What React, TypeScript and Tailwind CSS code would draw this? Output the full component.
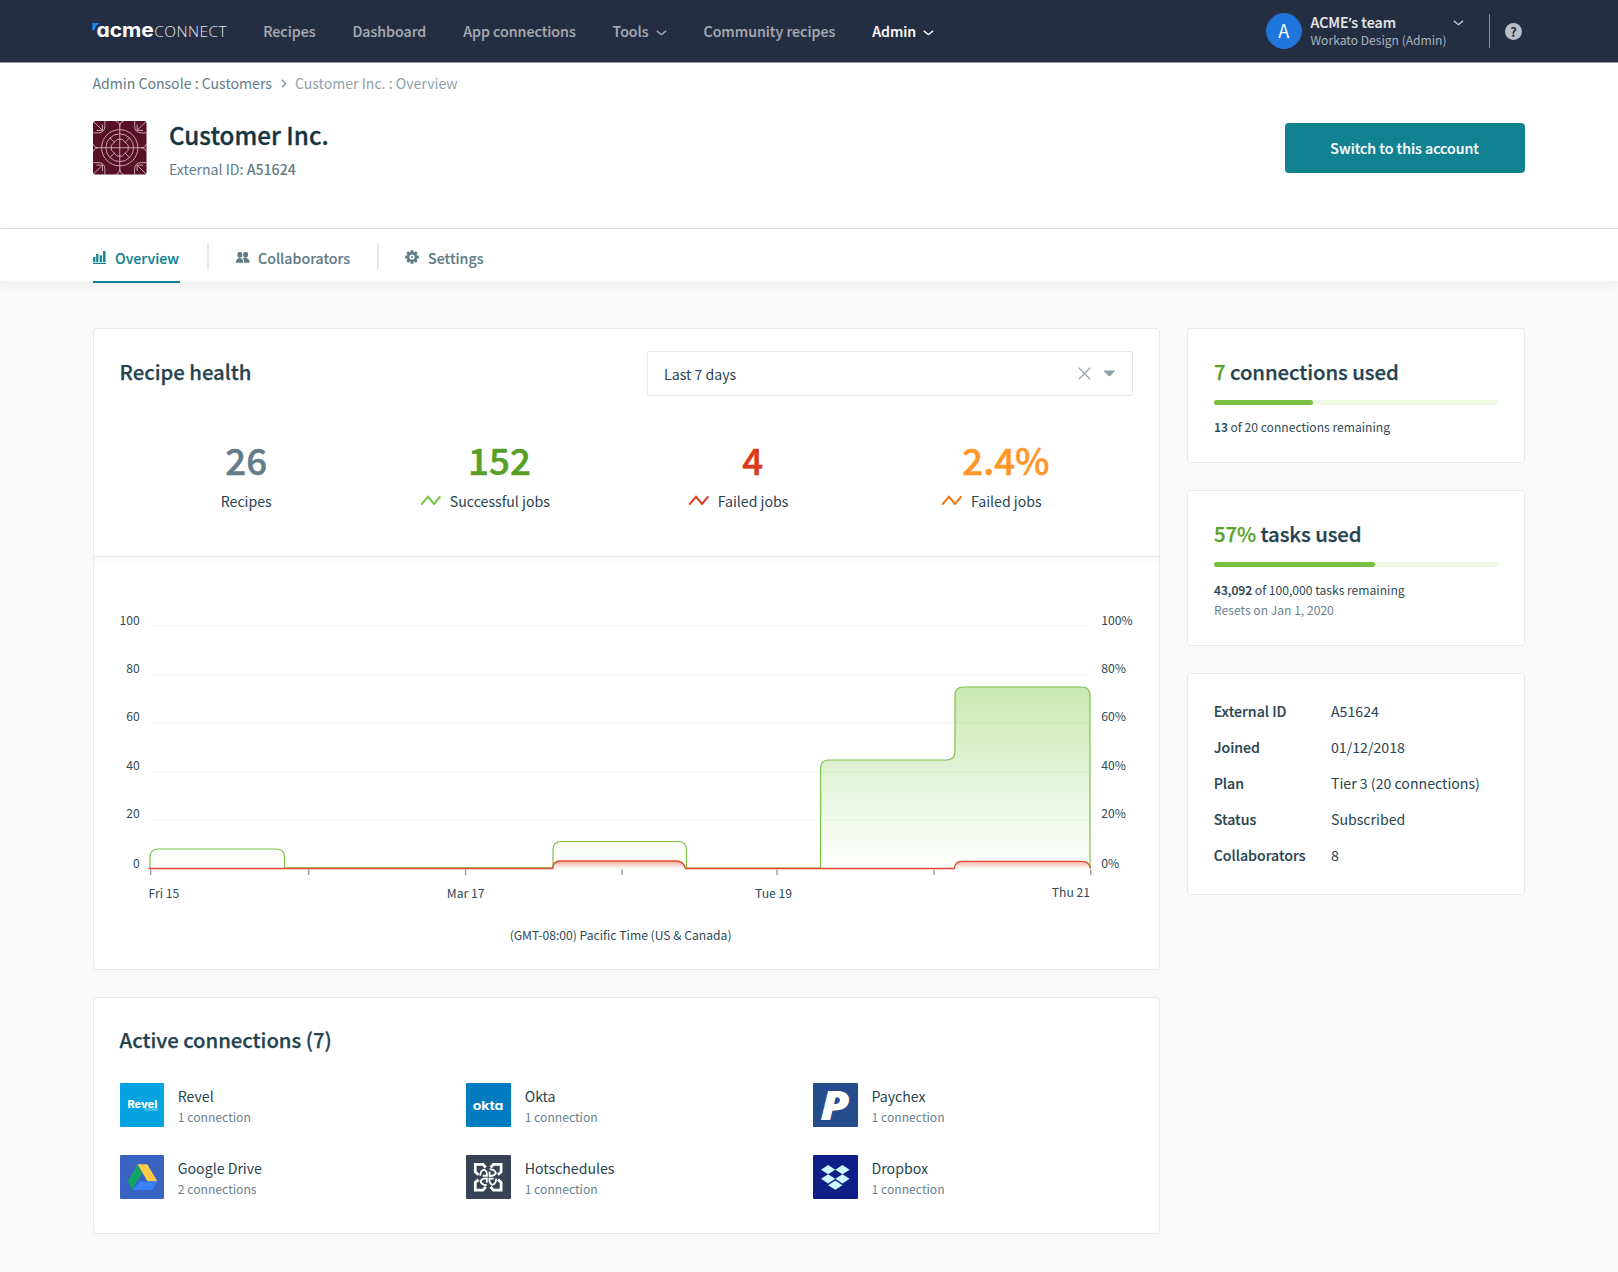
import React from "react";

const FONT = "font-['Noto_Sans_CJK_SC','Noto_Sans',sans-serif]";

function Chevron({ className, color }: { className?: string; color: string }) {
  return (
    <svg className={className} width="11" height="6" viewBox="0 0 11 6" fill="none">
      <path d="M0.8 0.9 L5.4 4.7 L10 0.9" stroke={color} strokeWidth="1.4" />
    </svg>
  );
}

function Logo() {
  return (
    <div className="flex h-[62px] w-[134px] items-center">
      <svg width="134" height="24" viewBox="0 0 134 24" className="overflow-visible">
        <path d="M-0.7 4 H6.8 L3 7.1 L1.2 11.2 H-0.7 Z" fill="#1a87f5" />
        <text x="3.4" y="17.6" fill="#fff" className="font-['Inter'] text-[19.3px] font-bold [font-feature-settings:'cv11']" textLength="57.5" lengthAdjust="spacingAndGlyphs">
          acme
        </text>
        <text x="61.2" y="17.7" fill="#e4e6ea" className="font-['Open_Sans'] text-[15.4px] font-light" textLength="72.5">
          CONNECT
        </text>
      </svg>
    </div>
  );
}

function TopBar() {
  return (
    <header className="flex h-[63px] justify-between border-b border-[#9296a3] bg-[#242e42] px-[93px]">
      <div className="flex items-center">
        <Logo />
        <nav className="ml-[36.2px] flex gap-[36.85px] text-[14.2px] leading-[62px] font-medium text-[#a5a9b1] [-webkit-text-stroke:0.15px]">
          <span>Recipes</span>
          <span>Dashboard</span>
          <span>App connections</span>
          <span className="flex items-center">
            Tools
            <Chevron className="mt-[3px] ml-[7px]" color="#a5a9b1" />
          </span>
          <span>Community recipes</span>
          <span className="flex items-center text-white">
            Admin
            <Chevron className="mt-[3px] ml-[7px]" color="#ffffff" />
          </span>
        </nav>
      </div>
      <div className="flex h-[62px] items-center">
        <div className="flex size-9 items-center justify-center rounded-full border-[1.5px] border-[#2c6cc4] bg-[#1f76dc] pb-[2px] text-[18px] leading-9 text-white">A</div>
        <div className="mb-[2px] ml-[8.7px] w-[142px]">
          <div className="h-[18px] text-[14.2px] leading-[18px] font-medium text-[#e6e8ec] [-webkit-text-stroke:0.15px]">
            ACME<span className="font-['Noto_Sans']">’</span>s team
          </div>
          <div className="h-[17px] text-[12.1px] leading-[17px] text-[#a9b4bf]">Workato Design (Admin)</div>
        </div>
        <Chevron className="mb-[17px]" color="#c3c8cf" />
        <div className="ml-[25.5px] h-[34px] w-px bg-[#8b919d]" />
        <div className="mr-[3px] ml-[15px] flex size-[17px] items-center justify-center rounded-full bg-[#b9bdc5] text-[12.5px] leading-[17px] font-bold text-[#242e42]">?</div>
      </div>
    </header>
  );
}

function PatternAvatar() {
  return (
    <svg width="53.5" height="53.5" viewBox="0 0 54 54" className="rounded-[3px]">
      <rect width="54" height="54" fill="#571127" />
      <g fill="none" stroke="#d2b3ba" strokeWidth="0.9">
        <circle cx="27" cy="27" r="18.3" />
        <circle cx="27" cy="27" r="14" />
        <path d="M27 3.5 V50.5 M3.5 27 H50.5" />
        <path d="M23 0 Q27 1 27 5 Q27 1 31 0 M23 54 Q27 53 27 49 Q27 53 31 54 M0 23 Q1 27 5 27 Q1 27 0 31 M54 23 Q53 27 49 27 Q53 27 54 31" />
        <path d="M24.5 18.5 H29.5 L35.5 24.5 V29.5 L29.5 35.5 H24.5 L18.5 29.5 V24.5 Z" />
        <path d="M17.1 17.1 L22 22 M32 32 L36.9 36.9 M36.9 17.1 L32 22 M22 32 L17.1 36.9" />
        {[0, 90, 180, 270].map((a) => (
          <g key={a} transform={`rotate(${a} 27 27)`}>
            <path d="M0 12 H5 Q12 12 12 5 V0 M0 0 L9.5 9.5 M9.5 3.5 V9.5 H3.5" />
          </g>
        ))}
      </g>
    </svg>
  );
}

function CompanyHeader() {
  return (
    <section className="flex h-[166px] flex-col border-b border-[#dde2e4] bg-white px-[93px]">
      <div className="mt-[10px] -ml-[0.6px] flex h-5 items-center text-[14.1px] leading-5">
        <span className="text-[#647c88]">Admin Console : Customers</span>
        <svg className="mt-px ml-[9px]" width="6" height="9" viewBox="0 0 6 9" fill="none">
          <path d="M1 0.7 L4.6 4.5 L1 8.3" stroke="#7b909b" strokeWidth="1.3" />
        </svg>
        <span className="ml-[8px] text-[#8fa2ac]">Customer Inc. : Overview</span>
      </div>
      <div className="mt-[26px] flex items-start">
        <div className="mt-[2px]">
          <PatternAvatar />
        </div>
        <div className="ml-[22.5px]">
          <h1 className="h-[31px] text-[24.2px] leading-[31px] font-medium text-[#15353f] [-webkit-text-stroke:0.3px]">Customer Inc.</h1>
          <p className="mt-[9px] text-[14.15px] leading-5 text-[#637b87]">
            External ID: <span className="font-medium">A51624</span>
          </p>
        </div>
        <button className="mt-[4.3px] mr-[0.4px] ml-auto h-[49.5px] w-[240px] rounded-[4px] bg-[#118292] text-[14.15px] leading-[49px] font-medium text-white [-webkit-text-stroke:0.15px]">Switch to this account</button>
      </div>
    </section>
  );
}

function BarsIcon() {
  return (
    <svg width="13" height="13" viewBox="0 0 13 13" fill="#118292">
      <path d="M0 11.8 H13 V13 H0 Z M0.2 6 H2.4 V11 H0.2 Z M3.2 3 H5.4 V11 H3.2 Z M6.7 4.2 H8.9 V11 H6.7 Z M10.1 0 H12.5 V11 H10.1 Z" />
    </svg>
  );
}

function PeopleIcon() {
  return (
    <svg width="14" height="11" viewBox="0 0 14 11" fill="#5f7b88">
      <rect x="1.4" y="0" width="4.8" height="5.4" rx="1.9" />
      <rect x="7.2" y="0" width="4.8" height="5.4" rx="1.9" />
      <path d="M0 10.8 C0 8 1 7 2.8 6.3 L3.8 5 L5 6.6 C6.6 7.2 7.4 8.4 7.4 10.8 Z" />
      <path d="M8.3 10.8 C8.3 8.8 7.8 7.4 6.7 6.4 L8.2 6.1 L9.6 5 L10.8 6.3 C12.6 7 13.6 8 13.6 10.8 Z" />
    </svg>
  );
}

function GearIcon() {
  return (
    <svg width="14" height="14" viewBox="0 0 14 14">
      <g fill="#5f7b88">
        {[0, 45, 90, 135].map((a) => (
          <rect key={a} x="5.5" y="0.2" width="3" height="13.6" rx="0.5" transform={`rotate(${a} 7 7)`} />
        ))}
        <circle cx="7" cy="7" r="5.1" />
      </g>
      <circle cx="7" cy="7" r="2.6" fill="#fff" />
      <circle cx="7" cy="7" r="1.1" fill="#5f7b88" />
    </svg>
  );
}

function Tabs() {
  return (
    <div className="relative z-10 flex h-[54px] border-b border-[#ebebeb] bg-white px-[93px] text-[14.2px] leading-[20px] font-medium text-[#647c88] shadow-[0_2px_10px_rgba(0,0,0,0.05)] [-webkit-text-stroke:0.15px]">
      <div className="-mb-px flex w-[87px] border-b-2 border-[#118292] pt-[19px] text-[#118292]">
        <div className="pt-[3px]">
          <BarsIcon />
        </div>
        <span className="ml-[9px]">Overview</span>
      </div>
      <div className="mt-[14px] ml-[27px] h-[27px] w-[1.5px] bg-[#e6e8e9]" />
      <div className="ml-[27px] flex pt-[19px]">
        <div className="pt-[4px]">
          <PeopleIcon />
        </div>
        <span className="ml-[8.5px]">Collaborators</span>
      </div>
      <div className="mt-[14px] ml-[27px] h-[27px] w-[1.5px] bg-[#e6e8e9]" />
      <div className="ml-[26.5px] flex pt-[19px]">
        <div className="pt-[2.4px]">
          <GearIcon />
        </div>
        <span className="ml-[9px]">Settings</span>
      </div>
    </div>
  );
}

const CARD = "border border-[#e7ebed] rounded-[3px] bg-white";

function Stat({ value, label, valueClass, stroke }: { value: string; label: string; valueClass: string; stroke?: string }) {
  return (
    <div className="flex flex-1 flex-col items-center">
      <div className={`h-[46px] text-[36.7px] leading-[46px] font-medium [-webkit-text-stroke:0.5px] ${valueClass}`}>{value}</div>
      <div className={`mt-[9px] flex h-5 items-center text-[14.15px] leading-5 text-[#28444f] ${stroke ? "pr-[29px]" : ""}`}>
        {stroke && (
          <svg className="mr-[7.8px] -mt-px" width="22" height="11" viewBox="0 0 22 11" fill="none">
            <path d="M1.2 9.6 L8 1.8 L14 9 L20.4 1.4" stroke={stroke} strokeWidth="2" />
          </svg>
        )}
        {label}
      </div>
    </div>
  );
}

const GRID = [
  { y: 626, label: "100", baseline: 625 },
  { y: 675, label: "80", baseline: 673 },
  { y: 723, label: "60", baseline: 721 },
  { y: 772, label: "40", baseline: 770 },
  { y: 820.5, label: "20", baseline: 818 },
  { y: 869, label: "0", baseline: 868 },
];

const TICKS = [150.7, 308.8, 465.5, 622, 777, 934, 1090.7];

const GREEN =
  "M150 868 V857.5 Q150 849 158.5 849 H276 Q284.5 849 284.5 857.5 V867.9 H553 V850 Q553 841.5 561.5 841.5 H678 Q686.5 841.5 686.5 850 V868.2 H820.6 V768.5 Q820.6 760 829.1 760 H946.5 Q955 760 955 751.5 V695.5 Q955 687 963.5 687 H1081.5 Q1090 687 1090 695.5 V868";
const RED =
  "M148.5 868.5 H552.6 Q553 861 560.5 861 H677 Q683 861 685.6 868.5 H954.3 Q955 861.3 961.5 861.3 H1082.5 Q1089 861.3 1090.5 868.5";

function Chart() {
  return (
    <svg width="1065" height="412" viewBox="94 557 1065 412" className="block text-[12.15px]">
      <defs>
        <linearGradient id="success" gradientUnits="userSpaceOnUse" x1="0" y1="687" x2="0" y2="868">
          <stop offset="0" stopColor="#c9e9b0" />
          <stop offset="0.4" stopColor="#def1d1" />
          <stop offset="1" stopColor="#ffffff" />
        </linearGradient>
        <linearGradient id="failure" gradientUnits="userSpaceOnUse" x1="0" y1="860" x2="0" y2="869">
          <stop offset="0" stopColor="#f2a28f" />
          <stop offset="1" stopColor="#ffffff" />
        </linearGradient>
        <linearGradient id="fade" gradientUnits="userSpaceOnUse" x1="0" y1="557" x2="0" y2="563">
          <stop offset="0" stopColor="#f7f7f7" />
          <stop offset="1" stopColor="#ffffff" />
        </linearGradient>
      </defs>
      <rect x="94" y="557" width="1065" height="6" fill="url(#fade)" />
      <path d={`${GREEN} Z`} fill="url(#success)" />
      {GRID.map((g) => (
        <g key={g.label} fill="#2f4955">
          <rect x="150" y={g.y - 1} width="941" height="1.6" fill="#1e3c4a" fillOpacity="0.03" />
          <text x="139.8" y={g.baseline} textAnchor="end">{g.label}</text>
          <text x="1101.2" y={g.baseline}>{`${g.label}%`}</text>
        </g>
      ))}
      {TICKS.map((x) => (
        <rect key={x} x={x - 0.7} y="869.5" width="1.4" height="5.5" fill="#9a9c9e" />
      ))}
      <path d={RED} fill="url(#failure)" />
      <path d={GREEN} fill="none" stroke="#7cc248" strokeWidth="1.2" />
      <path d={RED} fill="none" stroke="#de4a2c" strokeWidth="1.3" />
      <g fill="#2f4955">
        <text x="148.6" y="898">Fri 15</text>
        <text x="465.6" y="898" textAnchor="middle">Mar 17</text>
        <text x="773.5" y="898" textAnchor="middle">Tue 19</text>
        <text x="1090" y="897" textAnchor="end">Thu 21</text>
        <text x="620.6" y="940" textAnchor="middle">(GMT-08:00) Pacific Time (US &amp; Canada)</text>
      </g>
    </svg>
  );
}

const HEADING = "font-medium text-[#25424f] [-webkit-text-stroke:0.25px]";

function RecipeHealth() {
  return (
    <section className={`h-[642px] ${CARD}`}>
      <div className="h-[228px] border-b border-[#e3e8ea] pr-[26px] pl-[25.6px] pt-[22px]">
        <div className="flex h-[45px] items-center justify-between">
          <h2 className={`-mt-[5px] text-[20.35px] leading-6 tracking-[-0.03px] ${HEADING}`}>Recipe health</h2>
          <div className="flex h-[45px] w-[486px] items-center rounded-[2px] border border-[#e3e8ea] pr-[16px] pl-[16px] text-[14.15px] leading-5 text-[#28444f]">
            <span>Last 7 days</span>
            <svg className="ml-auto" width="13" height="13" viewBox="0 0 13 13">
              <path d="M0.8 0.8 L12.2 12.2 M12.2 0.8 L0.8 12.2" stroke="#93a6b0" strokeWidth="1.3" />
            </svg>
            <svg className="ml-[12px]" width="13" height="7" viewBox="0 0 13 7">
              <path d="M1.2 0.4 H11.4 Q12.4 0.4 11.7 1.3 L7.4 5.8 Q6.4 6.8 5.4 5.8 L0.9 1.3 Q0.3 0.4 1.2 0.4 Z" fill="#8fa3ae" />
            </svg>
          </div>
        </div>
        <div className="mt-[40px] mr-[0.5px] flex">
          <Stat value="26" label="Recipes" valueClass="text-[#637c89]" />
          <Stat value="152" label="Successful jobs" valueClass="text-[#56a028]" stroke="#76c442" />
          <Stat value="4" label="Failed jobs" valueClass="text-[#dc3a1b]" stroke="#dd3b1d" />
          <Stat value="2.4%" label="Failed jobs" valueClass="text-[#ff9627]" stroke="#ee760f" />
        </div>
      </div>
      <Chart />
    </section>
  );
}

const LOGO_SVG = { width: 44.4, height: 44.4, viewBox: "0 0 44 44" };

function RevelLogo() {
  return (
    <svg {...LOGO_SVG} className="rounded-[1px] bg-[#05a3e1]" fill="#fff">
      <text x="7.4" y="24.5" textLength="29.6" lengthAdjust="spacingAndGlyphs" className="font-['Inter'] text-[10.6px] font-extrabold">Revel</text>
      <text x="24" y="28.2" textLength="13" className="font-['Inter'] text-[3px]" fillOpacity="0.75">SYSTEMS</text>
    </svg>
  );
}

function OktaLogo() {
  return (
    <svg {...LOGO_SVG} className="rounded-[1px] bg-[#027cc1]" fill="#fff">
      <text x="6.6" y="26.8" textLength="30.5" lengthAdjust="spacingAndGlyphs" className="font-['Inter'] text-[11.8px] font-bold [font-feature-settings:'cv11']">okta</text>
    </svg>
  );
}

function PaychexLogo() {
  return (
    <svg {...LOGO_SVG} className="overflow-visible rounded-[1px] bg-[#254c8c]" fill="#fff">
      <text x="7.2" y="36.6" textLength="29" lengthAdjust="spacingAndGlyphs" className="font-['Open_Sans'] text-[40.5px] leading-none font-extrabold italic">P</text>
    </svg>
  );
}

function DriveLogo() {
  return (
    <svg {...LOGO_SVG} className="rounded-[1px] bg-[#3963c2]">
      <path d="M17.4 9.2 L7.5 26 L12.3 34.8 L22.2 17.8 Z" fill="#10a465" />
      <path d="M17.4 9.2 H27 L37 26 H27.3 Z" fill="#ffcb44" />
      <path d="M17.2 26 H37 L32 34.8 H12.3 Z" fill="#3d80f5" />
      <path d="M17.2 26 L12.3 34.8 L20 26 Z" fill="#2a63d0" />
    </svg>
  );
}

function HotschedulesLogo() {
  return (
    <svg {...LOGO_SVG} className="rounded-[1px] bg-[#384256]">
      <g fill="none" stroke="#fff">
        {["1,1", "-1,1", "1,-1", "-1,-1"].map((s) => (
          <g key={s} transform={`translate(22 22) scale(${s})`}>
            <path d="M-2.4 -9.6 L-5.2 -12.8 H-12.8 V-5.2 L-9.6 -2.4" strokeWidth="2.7" />
          </g>
        ))}
        {[0, 90, 180, 270].map((a) => (
          <g key={a} transform={`rotate(${a} 22 22)`}>
            <path d="M14 20.6 C14.4 16.4 15.6 14.8 18 14.4 C20.4 15.6 21 17.6 20.8 20.6 H16.6" strokeWidth="1.8" />
          </g>
        ))}
      </g>
    </svg>
  );
}

function DropboxLogo() {
  const diamonds = [[15, 14.6], [29.2, 14.6], [15, 23.6], [29.2, 23.6], [22.1, 29.9]];
  return (
    <svg {...LOGO_SVG} className="rounded-[1px] bg-[#101f87]">
      {diamonds.map(([x, y]) => (
        <path key={`${x}-${y}`} d={`M${x - 7.1} ${y} L${x} ${y - 4.6} L${x + 7.1} ${y} L${x} ${y + 4.6} Z`} fill="#cdf8ff" />
      ))}
    </svg>
  );
}

const CONNECTIONS = [
  { name: "Revel", note: "1 connection", Icon: RevelLogo },
  { name: "Okta", note: "1 connection", Icon: OktaLogo },
  { name: "Paychex", note: "1 connection", Icon: PaychexLogo },
  { name: "Google Drive", note: "2 connections", Icon: DriveLogo },
  { name: "Hotschedules", note: "1 connection", Icon: HotschedulesLogo },
  { name: "Dropbox", note: "1 connection", Icon: DropboxLogo },
];

function ActiveConnections() {
  return (
    <section className={`mt-[27px] h-[237px] pl-[25.6px] ${CARD}`}>
      <h2 className={`mt-[28px] text-[20.35px] leading-[26px] tracking-[-0.05px] ${HEADING}`}>Active connections (7)</h2>
      <div className="mt-[31px] grid w-[1040.6px] grid-cols-3 gap-y-[28px]">
        {CONNECTIONS.map(({ name, note, Icon }) => (
          <div key={name} className="flex h-[44px]">
            <Icon />
            <div className="ml-[13.8px] pt-[3px]">
              <div className="h-[20px] text-[14.15px] leading-5 text-[#28444f]">{name}</div>
              <div className="mt-[2px] h-[18px] text-[12.17px] leading-[18px] text-[#6b828e]">{note}</div>
            </div>
          </div>
        ))}
      </div>
    </section>
  );
}

function UsageCard({ className, textGap, amount, title, percent, strong, rest, note }: { className: string; textGap: string; amount: string; title: string; percent: number; strong: string; rest: string; note?: string }) {
  return (
    <section className={`px-[26px] pt-[30px] text-[12.12px] leading-5 text-[#304a56] ${CARD} ${className}`}>
      <h2 className={`text-[20.35px] leading-[24px] tracking-[-0.08px] ${HEADING}`}>
        <span className="text-[#59a22a]">{amount}</span> {title}
      </h2>
      <div className="mt-[17px] h-[5px] rounded-full bg-[#f0f9e6]">
        <div className="h-[5px] rounded-full bg-[#76c043]" style={{ width: `${percent}%` }} />
      </div>
      <p className={textGap}>
        <span className="font-medium text-[#25424f] [-webkit-text-stroke:0.15px]">{strong}</span> {rest}
      </p>
      {note && <p className="text-[#6b828e]">{note}</p>}
    </section>
  );
}

const DETAILS = [
  ["External ID", "A51624"],
  ["Joined", "01/12/2018"],
  ["Plan", "Tier 3 (20 connections)"],
  ["Status", "Subscribed"],
  ["Collaborators", "8"],
];

function Details() {
  return (
    <section className={`mt-[27px] h-[222px] px-[25.7px] pt-[19px] text-[14.15px] leading-[36px] text-[#28444f] ${CARD}`}>
      {DETAILS.map(([k, v]) => (
        <div key={k} className="flex">
          <span className="w-[117.3px] font-medium [-webkit-text-stroke:0.15px]">{k}</span>
          <span>{v}</span>
        </div>
      ))}
    </section>
  );
}

export default function App() {
  return (
    <div className={`h-[1272px] w-[1618px] overflow-hidden bg-[#fafafa] ${FONT}`}>
      <TopBar />
      <CompanyHeader />
      <Tabs />
      <main className="mt-[45px] flex gap-[27px] px-[93px]">
        <div className="w-[1067px]">
          <RecipeHealth />
          <ActiveConnections />
        </div>
        <aside className="w-[338px]">
          <UsageCard className="h-[135px]" textGap="mt-[12px]" amount="7" title="connections used" percent={35} strong="13" rest="of 20 connections remaining" />
          <UsageCard className="mt-[27px] h-[156px]" textGap="mt-[13px]" amount="57%" title="tasks used" percent={56.7} strong="43,092" rest="of 100,000 tasks remaining" note="Resets on Jan 1, 2020" />
          <Details />
        </aside>
      </main>
    </div>
  );
}
